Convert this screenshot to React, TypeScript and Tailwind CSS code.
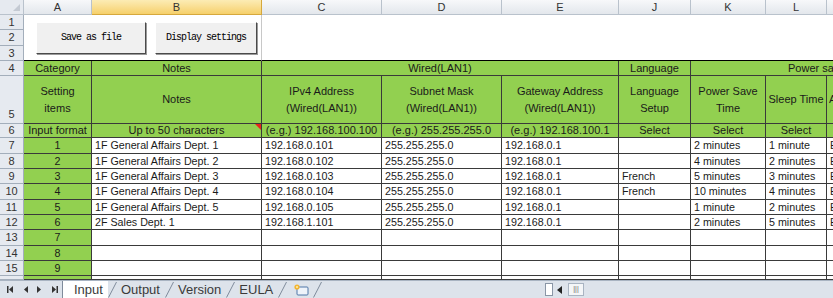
import React from "react";

const G = "bg-[#92d050]";
const cell = "shrink-0 box-border border-r border-b border-[#3a3a3a] overflow-hidden whitespace-nowrap";
const colW = ["w-[170px]", "w-[120px]", "w-[120px]", "w-[117px]", "w-[72px]", "w-[75px]", "w-[61px]", "w-[120px]"];

type Row = { n: string; h: string; v: string[] };
const data: Row[] = [
  { n: "7", h: "h-[16px]", v: ["1", "1F General Affairs Dept. 1", "192.168.0.101", "255.255.255.0", "192.168.0.1", "", "2 minutes", "1 minute", "E"] },
  { n: "8", h: "h-[15px]", v: ["2", "1F General Affairs Dept. 2", "192.168.0.102", "255.255.255.0", "192.168.0.1", "", "4 minutes", "2 minutes", "E"] },
  { n: "9", h: "h-[15px]", v: ["3", "1F General Affairs Dept. 3", "192.168.0.103", "255.255.255.0", "192.168.0.1", "French", "5 minutes", "3 minutes", "E"] },
  { n: "10", h: "h-[16px]", v: ["4", "1F General Affairs Dept. 4", "192.168.0.104", "255.255.255.0", "192.168.0.1", "French", "10 minutes", "4 minutes", "E"] },
  { n: "11", h: "h-[15px]", v: ["5", "1F General Affairs Dept. 5", "192.168.0.105", "255.255.255.0", "192.168.0.1", "", "1 minute", "2 minutes", "E"] },
  { n: "12", h: "h-[15px]", v: ["6", "2F Sales Dept. 1", "192.168.1.101", "255.255.255.0", "192.168.0.1", "", "2 minutes", "5 minutes", "E"] },
  { n: "13", h: "h-[16px]", v: ["7", "", "", "", "", "", "", "", ""] },
  { n: "14", h: "h-[15px]", v: ["8", "", "", "", "", "", "", "", ""] },
  { n: "15", h: "h-[15px]", v: ["9", "", "", "", "", "", "", "", ""] },
  { n: "", h: "h-[4px]", v: ["", "", "", "", "", "", "", "", ""] },
];

function RowNum({ n, h, bottom }: { n: string; h: string; bottom?: boolean }) {
  return (
    <div
      className={`shrink-0 w-[24px] ${h} box-border border-r border-b border-[#a3aebb] bg-[#e6eaf0] flex justify-center overflow-hidden text-[11px] text-[#333] ${
        bottom ? "items-end" : "items-center"
      }`}
    >
      {n}
    </div>
  );
}

function ColHead({ l, w, sel }: { l: string; w: string; sel?: boolean }) {
  return (
    <div
      className={`shrink-0 ${w} h-[15px] box-border border-r border-b flex items-center justify-center text-[11px] text-[#333] ${
        sel ? "bg-gradient-to-b from-[#fcecb4] to-[#f6d06a] border-[#d6a83c]" : "bg-gradient-to-b from-[#f7f8fa] to-[#e3e7ec] border-[#b9c2cc]"
      }`}
    >
      {l}
    </div>
  );
}

function Slant() {
  return (
    <svg className="shrink-0" width="9" height="17" viewBox="0 0 9 17">
      <line x1="0.5" y1="16.5" x2="8.5" y2="1" stroke="#7f8b9b" strokeWidth="1" />
    </svg>
  );
}

export default function App() {
  return (
    <div className="relative w-[833px] h-[298px] overflow-hidden bg-white font-['Liberation_Sans',Arial,sans-serif]">
      {/* column headers */}
      <div className="flex">
        <div className="shrink-0 w-[24px] h-[15px] box-border border-r border-b border-[#b9c2cc] bg-[#e6eaf0] flex items-end justify-end p-[3px]">
          <div className="w-0 h-0 border-l-[7px] border-l-transparent border-b-[7px] border-b-[#c4cad3]" />
        </div>
        <ColHead l="A" w="w-[68px]" />
        <ColHead l="B" w="w-[170px]" sel />
        <ColHead l="C" w="w-[120px]" />
        <ColHead l="D" w="w-[120px]" />
        <ColHead l="E" w="w-[117px]" />
        <ColHead l="J" w="w-[72px]" />
        <ColHead l="K" w="w-[75px]" />
        <ColHead l="L" w="w-[61px]" />
        <ColHead l="" w="w-[120px]" />
      </div>

      {/* rows 1-3 with buttons */}
      <div className="flex">
        <div className="flex flex-col shrink-0">
          <RowNum n="1" h="h-[15px]" />
          <RowNum n="2" h="h-[16px]" />
          <RowNum n="3" h="h-[15px]" />
        </div>
        <div className="shrink-0 w-[238px] h-[46px] box-border border-b border-b-black border-r border-r-[#c8c8c8] flex items-center gap-[9px] pl-[12px] font-['Liberation_Mono',monospace] text-[10px] tracking-[-1px] text-black">
          <div className="w-[110px] h-[32px] box-border bg-[#f0f0f0] border border-t-white border-l-white border-r-[#4a4a4a] border-b-[#4a4a4a] shadow-[1px_1px_0_#9a9a9a] flex items-center justify-center whitespace-nowrap">
            Save as file
          </div>
          <div className="w-[102px] h-[32px] box-border bg-[#f0f0f0] border border-t-white border-l-white border-r-[#4a4a4a] border-b-[#4a4a4a] shadow-[1px_1px_0_#9a9a9a] flex items-center justify-center whitespace-nowrap">
            Display settings
          </div>
        </div>
        <div className="shrink-0 w-[600px] h-[46px] box-border border-b border-black" />
      </div>

      {/* row 4 */}
      <div className="flex text-[11px] text-[#1a1a1a]">
        <RowNum n="4" h="h-[15px]" />
        <div className={`${cell} ${G} w-[68px] h-[15px] flex items-center justify-center`}>Category</div>
        <div className={`${cell} ${G} w-[170px] h-[15px] flex items-center justify-center`}>Notes</div>
        <div className={`${cell} ${G} w-[357px] h-[15px] flex items-center justify-center`}>Wired(LAN1)</div>
        <div className={`${cell} ${G} w-[72px] h-[15px] flex items-center justify-center`}>Language</div>
        <div className={`${cell} ${G} w-[200px] h-[15px] flex items-center pl-[97px]`}>Power saving</div>
      </div>

      {/* row 5 */}
      <div className="flex text-[11px] text-[#1a1a1a] leading-[17px]">
        <RowNum n="5" h="h-[48px]" bottom />
        <div className={`${cell} ${G} w-[68px] h-[48px] flex flex-col items-center justify-center`}>
          <span>Setting</span>
          <span>items</span>
        </div>
        <div className={`${cell} ${G} w-[170px] h-[48px] flex items-center justify-center`}>Notes</div>
        <div className={`${cell} ${G} w-[120px] h-[48px] flex flex-col items-center justify-center`}>
          <span>IPv4 Address</span>
          <span>(Wired(LAN1))</span>
        </div>
        <div className={`${cell} ${G} w-[120px] h-[48px] flex flex-col items-center justify-center`}>
          <span>Subnet Mask</span>
          <span>(Wired(LAN1))</span>
        </div>
        <div className={`${cell} ${G} w-[117px] h-[48px] flex flex-col items-center justify-center`}>
          <span>Gateway Address</span>
          <span>(Wired(LAN1))</span>
        </div>
        <div className={`${cell} ${G} w-[72px] h-[48px] flex flex-col items-center justify-center`}>
          <span>Language</span>
          <span>Setup</span>
        </div>
        <div className={`${cell} ${G} w-[75px] h-[48px] flex flex-col items-center justify-center`}>
          <span>Power Save</span>
          <span>Time</span>
        </div>
        <div className={`${cell} ${G} w-[61px] h-[48px] flex items-center justify-center`}>Sleep Time</div>
        <div className={`${cell} ${G} w-[120px] h-[48px] flex items-center pl-[2px]`}>Auto</div>
      </div>

      {/* row 6 */}
      <div className="flex text-[11px] text-[#1a1a1a]">
        <RowNum n="6" h="h-[14px]" />
        <div className={`${cell} ${G} w-[68px] h-[14px] flex items-center justify-center`}>Input format</div>
        <div className={`${cell} ${G} w-[170px] h-[14px] flex items-center justify-center relative`}>
          Up to 50 characters
          <div className="absolute right-0 top-0 w-0 h-0 border-l-[6px] border-l-transparent border-t-[6px] border-t-[#e8261c]" />
        </div>
        <div className={`${cell} ${G} w-[120px] h-[14px] flex items-center justify-center`}>(e.g.) 192.168.100.100</div>
        <div className={`${cell} ${G} w-[120px] h-[14px] flex items-center justify-center`}>(e.g.) 255.255.255.0</div>
        <div className={`${cell} ${G} w-[117px] h-[14px] flex items-center justify-center`}>(e.g.) 192.168.100.1</div>
        <div className={`${cell} ${G} w-[72px] h-[14px] flex items-center justify-center`}>Select</div>
        <div className={`${cell} ${G} w-[75px] h-[14px] flex items-center justify-center`}>Select</div>
        <div className={`${cell} ${G} w-[61px] h-[14px] flex items-center justify-center`}>Select</div>
        <div className={`${cell} ${G} w-[120px] h-[14px] flex items-center justify-center`}>Select</div>
      </div>

      {/* data rows */}
      {data.map((r, i) => (
        <div key={i} className="flex text-[10.7px] text-[#1a1a1a]">
          <RowNum n={r.n} h={r.h} />
          <div className={`${cell} ${G} w-[68px] ${r.h} flex items-center justify-center`}>{r.v[0]}</div>
          {colW.map((w, j) => (
            <div key={j} className={`${cell} ${w} ${r.h} bg-white flex items-center pl-[3px]`}>
              {r.v[j + 1]}
            </div>
          ))}
        </div>
      ))}

      {/* sheet tab bar */}
      <div className="relative w-[833px] h-[18px] bg-[#dde3eb] border-t border-[#a9b4c2] flex items-center">
        <div className="flex items-center gap-[7px] pl-[6px] w-[62px] shrink-0">
          <svg width="9" height="9" viewBox="0 0 9 9"><rect x="1" y="1" width="1.5" height="7" fill="#333" /><path d="M7 1 L3 4.5 L7 8Z" fill="#333" /></svg>
          <svg width="7" height="9" viewBox="0 0 7 9"><path d="M6 1 L2 4.5 L6 8Z" fill="#333" /></svg>
          <svg width="7" height="9" viewBox="0 0 7 9"><path d="M1 1 L5 4.5 L1 8Z" fill="#333" /></svg>
          <svg width="9" height="9" viewBox="0 0 9 9"><path d="M2 1 L6 4.5 L2 8Z" fill="#333" /><rect x="6.5" y="1" width="1.5" height="7" fill="#333" /></svg>
        </div>
        <div className="flex items-start h-[17px] text-[13px] text-[#3a3a3a] leading-[16px]">
          <div className="h-[17px] bg-white pl-[11px] pr-[5px] border-l border-[#7f8b9b] flex items-center">Input</div>
          <Slant />
          <div className="h-[17px] pl-[4px] pr-[5px] flex items-center">Output</div>
          <Slant />
          <div className="h-[17px] pl-[4px] pr-[5px] flex items-center">Version</div>
          <Slant />
          <div className="h-[17px] pl-[4px] pr-[5px] flex items-center">EULA</div>
          <Slant />
          <div className="h-[17px] pl-[5px] pr-[3px] flex items-center">
            <svg width="18" height="13" viewBox="0 0 18 13">
              <rect x="5" y="4" width="11" height="8" rx="1" fill="#eef3fa" stroke="#4f77a8" />
              <circle cx="5" cy="4" r="2.6" fill="#f4b531" />
              <circle cx="5" cy="4" r="1" fill="#fff2b0" />
            </svg>
          </div>
          <Slant />
        </div>
        <div className="absolute left-[545px] top-[1px] h-[15px] flex items-center">
          <div className="w-[8px] h-[13px] bg-white border border-[#8a96a6]" />
          <svg className="ml-[4px]" width="6" height="8" viewBox="0 0 6 8"><path d="M5 0 L0 4 L5 8Z" fill="#222" /></svg>
          <div className="ml-[5px] w-[16px] h-[13px] bg-[#f4f6f8] border border-[#a9b4c2] flex items-center justify-center text-[7px] text-[#666]">|||</div>
        </div>
      </div>
    </div>
  );
}
